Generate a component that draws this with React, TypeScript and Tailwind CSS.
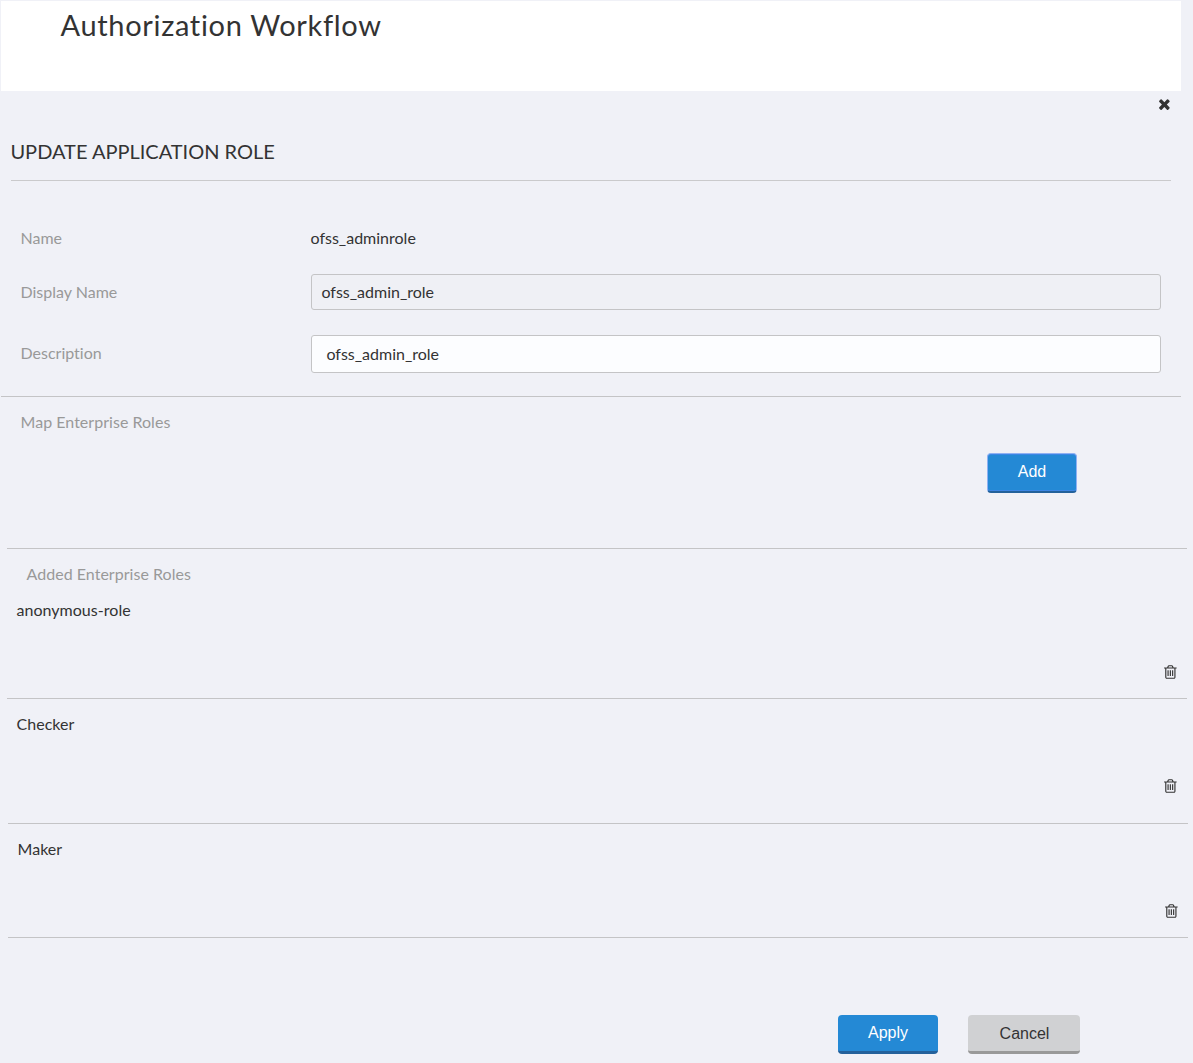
import React from "react";

const TIMES =
  "M1490 1322q0 40-28 68l-136 136q-28 28-68 28t-68-28l-294-294-294 294q-28 28-68 28t-68-28l-136-136q-28-28-28-68t28-68l294-294-294-294q-28-28-28-68t28-68l136-136q28-28 68-28t68 28l294 294 294-294q28-28 68-28t68 28l136 136q28 28 28 68t-28 68l-294 294 294 294q28 28 28 68z";
const TRASH =
  "M704 736v576q0 14-9 23t-23 9h-64q-14 0-23-9t-9-23v-576q0-14 9-23t23-9h64q14 0 23 9t9 23zm256 0v576q0 14-9 23t-23 9h-64q-14 0-23-9t-9-23v-576q0-14 9-23t23-9h64q14 0 23 9t9 23zm256 0v576q0 14-9 23t-23 9h-64q-14 0-23-9t-9-23v-576q0-14 9-23t23-9h64q14 0 23 9t9 23zm128 724v-948h-896v948q0 22 7 40.5t14.5 27 10.5 8.5h832q3 0 10.5-8.5t14.5-27 7-40.5zm-672-1076h448l-48-117q-7-9-17-11h-317q-10 2-17 11zm928 32v64q0 14-9 23t-23 9h-96v948q0 83-47 143.5t-113 60.5h-832q-66 0-113-58.5t-47-141.5v-952h-96q-14 0-23-9t-9-23v-64q0-14 9-23t23-9h309l70-167q15-37 54-63t79-26h320q40 0 79 26t54 63l70 167h309q14 0 23 9t9 23z";

function Icon({ d }: { d: string }) {
  return (
    <svg viewBox="-40 0 1792 1792" className="block size-4 fill-[#333333]" aria-hidden="true">
      <path d={d} />
    </svg>
  );
}

function Role({ name, className }: { name: string; className: string }) {
  return (
    <div className={`flex w-[1180px] flex-col justify-between border-b border-[#c4c4c6] ${className}`}>
      <span className="tracking-[0.03px]">{name}</span>
      <button aria-label={`Remove ${name}`} className="self-end">
        <Icon d={TRASH} />
      </button>
    </div>
  );
}

export default function App() {
  return (
    <div className="h-[1063px] w-[1193px] overflow-hidden bg-[#f0f1f7] pt-px font-['Lato',sans-serif] text-base leading-6 text-[#333333] [font-variant-ligatures:none]">
      <header className="ml-px h-[90px] w-[1180px] bg-white pl-[59.5px] pt-[4px]">
        <h1 className="text-[29px] leading-10 tracking-[0.67px]">Authorization Workflow</h1>
      </header>

      <main>
        <div className="flex h-[41px] justify-end pr-[21px] pt-[5px]">
          <button aria-label="Close" className="h-4">
            <Icon d={TIMES} />
          </button>
        </div>
        <h2 className="ml-[11px] h-[49px] w-[1160px] border-b border-[#cacacc] pt-[4px] text-xl leading-[30px]">
          <span className="-ml-[0.6px]">UPDATE APPLICATION ROLE</span>
        </h2>

        <section className="ml-px h-[216px] w-[1180px] border-b border-[#c4c4c6] pl-[19.5px] pt-[45px]">
          <div className="flex h-[48px]">
            <span className="w-[290px] text-[#999999]">Name</span>
            <span>ofss_adminrole</span>
          </div>
          <div className="flex h-[61px] items-start">
            <label className="w-[290.5px] pt-[6px] text-[#999999]">Display Name</label>
            <input
              readOnly
              value="ofss_admin_role"
              className="h-9 w-[850px] rounded-[3px] border border-[#c4c4c6] bg-[#eff0f5] px-[9.4px] pb-[2px] outline-none"
            />
          </div>
          <div className="flex items-start">
            <label className="w-[290.5px] pt-[6px] text-[#999999]">Description</label>
            <input
              readOnly
              value="ofss_admin_role"
              className="h-[38px] w-[850px] rounded-[3px] border border-[#c4c4c6] bg-[#fcfdff] px-[14.4px] pb-[2px] outline-none"
            />
          </div>
        </section>

        <section className="ml-[7px] h-[152px] w-[1180px] border-b border-[#c4c4c6] pl-[13.5px] pt-[13px]">
          <p className="tracking-[0.03px] text-[#999999]">Map Enterprise Roles</p>
          <div className="flex justify-end pr-[110px] pt-[19px]">
            <button className="h-10 w-[90px] rounded-[4px] border border-b-2 border-[#8fb1f3] border-b-[#24619b] bg-[#2489d5] pb-[2px] font-['Liberation_Sans',sans-serif] text-white shadow-[inset_0_-1px_0_#3c86e4,inset_0_1px_0_#3c86e4]">
              Add
            </button>
          </div>
        </section>

        <section className="pl-[7px]">
          <p className="h-[49px] pl-[19.5px] pt-[13px] tracking-[0.03px] text-[#999999]">Added Enterprise Roles</p>
          <Role name="anonymous-role" className="h-[101px] pb-[18px] pl-[9.5px] pr-[9px]" />
          <div className="pl-px">
            <Role name="Checker" className="h-[125px] pb-[29px] pl-[8.5px] pr-[10px] pt-[13px]" />
            <Role name="Maker" className="h-[114px] pb-[18px] pl-[9.5px] pr-[9px] pt-[13px]" />
          </div>
        </section>

        <div className="flex justify-end gap-[30px] pr-[113px] pt-[77px] font-['Liberation_Sans',sans-serif]">
          <button className="h-[39px] w-[100px] rounded-[4px] border-b-[3px] border-[#24619b] bg-[#2489d5] text-white">Apply</button>
          <button className="h-[39px] w-[112px] rounded-[4px] border-b-[3px] border-[#999999] bg-[#d0d1d3] pl-px pt-[2px]">Cancel</button>
        </div>
      </main>
    </div>
  );
}
